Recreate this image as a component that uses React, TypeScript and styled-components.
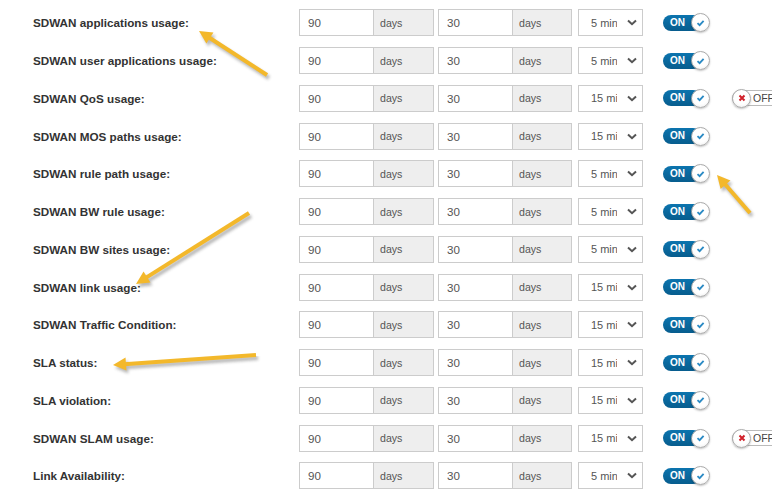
import React from "react";
import styled, { createGlobalStyle } from "styled-components";

const GlobalStyle = createGlobalStyle`
  html, body {
    margin: 0;
    padding: 0;
    background: #fff;
    font-family: "Liberation Sans", Arial, sans-serif;
  }
`;

const Page = styled.div`
  position: relative;
  width: 772px;
  height: 493px;
  overflow: hidden;
  padding-top: 4px;
  box-sizing: border-box;
`;

const Row = styled.div`
  display: flex;
  align-items: center;
  height: 37.75px;
  padding-left: 33px;
`;

const Label = styled.div`
  width: 266px;
  flex: none;
  font-size: 11.7px;
  font-weight: bold;
  color: #333;
`;

const InputGroup = styled.div<{ $gap: number }>`
  display: flex;
  height: 27px;
  flex: none;
  margin-right: ${(p) => p.$gap}px;
`;

const Field = styled.div`
  width: 74px;
  box-sizing: border-box;
  border: 1px solid #ccc;
  border-right: none;
  display: flex;
  align-items: center;
  padding-left: 8px;
  font-size: 11.6px;
  color: #555;
`;

const Addon = styled.div<{ $w: number }>`
  width: ${(p) => p.$w}px;
  box-sizing: border-box;
  border: 1px solid #ccc;
  background: #eee;
  display: flex;
  align-items: center;
  padding-left: 6px;
  font-size: 10.6px;
  color: #555;
`;

const Select = styled.div`
  width: 65px;
  height: 27px;
  box-sizing: border-box;
  border: 1px solid #ccc;
  display: flex;
  align-items: center;
  padding-left: 12px;
  margin-right: 20px;
  flex: none;
`;

const SelectText = styled.span`
  width: 26px;
  flex: none;
  overflow: hidden;
  white-space: nowrap;
  font-size: 11px;
  color: #555;
`;

const Chevron = styled.svg`
  margin-left: 10px;
  flex: none;
`;

const Switch = styled.div`
  position: relative;
  width: 47px;
  height: 19px;
  flex: none;
  display: flex;
  align-items: center;
`;

const Track = styled.div`
  width: 38px;
  height: 16px;
  border-radius: 8px;
  background: linear-gradient(#0c74ae, #075d8e);
  color: #fff;
  font-size: 10px;
  font-weight: bold;
  display: flex;
  align-items: center;
  padding-left: 7px;
  box-sizing: border-box;
  line-height: 1;
`;

const Knob = styled.div<{ $left: boolean }>`
  position: absolute;
  top: 0;
  ${(p) => (p.$left ? "left: 0;" : "right: 0;")}
  width: 19px;
  height: 19px;
  box-sizing: border-box;
  border-radius: 50%;
  border: 1px solid #aaa;
  background: radial-gradient(circle at 50% 40%, #fff 55%, #e8e8e8);
  box-shadow: 0 1px 2px rgba(0, 0, 0, 0.25);
  display: flex;
  align-items: center;
  justify-content: center;
`;

const OffSwitch = styled.div`
  position: relative;
  margin-left: 22px;
  width: 60px;
  height: 19px;
  flex: none;
  display: flex;
  align-items: center;
`;

const OffTrack = styled.div`
  width: 60px;
  height: 16px;
  border-radius: 8px;
  border: 1px solid #bbb;
  box-sizing: border-box;
  background: #fff;
  color: #444;
  font-size: 10.5px;
  display: flex;
  align-items: center;
  padding-left: 20px;
  line-height: 1;
`;

const Arrows = styled.svg`
  position: absolute;
  left: 0;
  top: 0;
  pointer-events: none;
`;

type Item = { label: string; every: string; off?: boolean };

const items: Item[] = [
  { label: "SDWAN applications usage:", every: "5 min" },
  { label: "SDWAN user applications usage:", every: "5 min" },
  { label: "SDWAN QoS usage:", every: "15 min", off: true },
  { label: "SDWAN MOS paths usage:", every: "15 min" },
  { label: "SDWAN rule path usage:", every: "5 min" },
  { label: "SDWAN BW rule usage:", every: "5 min" },
  { label: "SDWAN BW sites usage:", every: "5 min" },
  { label: "SDWAN link usage:", every: "15 min" },
  { label: "SDWAN Traffic Condition:", every: "15 min" },
  { label: "SLA status:", every: "15 min" },
  { label: "SLA violation:", every: "15 min" },
  { label: "SDWAN SLAM usage:", every: "15 min", off: true },
  { label: "Link Availability:", every: "5 min" },
];

function Check() {
  return (
    <svg width="9" height="8" viewBox="0 0 9 8">
      <path d="M1.5 4.2 L3.6 6.2 L7.6 1.8" fill="none" stroke="#2a8ac4" strokeWidth="1.8" />
    </svg>
  );
}

function Cross() {
  return (
    <svg width="8" height="8" viewBox="0 0 8 8">
      <path d="M1.5 1.5 L6.5 6.5 M6.5 1.5 L1.5 6.5" stroke="#d0202a" strokeWidth="2" />
    </svg>
  );
}

function Arrow({ x1, y1, x2, y2 }: { x1: number; y1: number; x2: number; y2: number }) {
  const ang = Math.atan2(y2 - y1, x2 - x1);
  const len = 13;
  const half = 6.5;
  const bx = x2 - Math.cos(ang) * len;
  const by = y2 - Math.sin(ang) * len;
  const px = -Math.sin(ang) * half;
  const py = Math.cos(ang) * half;
  const head = `${x2},${y2} ${bx + px},${by + py} ${bx - px},${by - py}`;
  return (
    <g>
      <g transform="translate(2,3)" opacity="0.35" filter="url(#blur)">
        <line x1={x1} y1={y1} x2={bx} y2={by} stroke="#333" strokeWidth="4" />
        <polygon points={head} fill="#333" />
      </g>
      <line x1={x1} y1={y1} x2={bx + Math.cos(ang) * 2} y2={by + Math.sin(ang) * 2} stroke="#f3b82b" strokeWidth="4" />
      <polygon points={head} fill="#f3b82b" />
    </g>
  );
}

export default function App() {
  return (
    <Page>
      <GlobalStyle />
      {items.map((it) => (
        <Row key={it.label}>
          <Label>{it.label}</Label>
          <InputGroup $gap={4}>
            <Field>90</Field>
            <Addon $w={61}>days</Addon>
          </InputGroup>
          <InputGroup $gap={6}>
            <Field>30</Field>
            <Addon $w={60}>days</Addon>
          </InputGroup>
          <Select>
            <SelectText>{it.every}</SelectText>
            <Chevron width="10" height="7" viewBox="0 0 10 7">
              <path d="M1 1.5 L5 5.2 L9 1.5" fill="none" stroke="#555" strokeWidth="2" />
            </Chevron>
          </Select>
          <Switch>
            <Track>ON</Track>
            <Knob $left={false}>
              <Check />
            </Knob>
          </Switch>
          {it.off && (
            <OffSwitch>
              <OffTrack>OFF</OffTrack>
              <Knob $left>
                <Cross />
              </Knob>
            </OffSwitch>
          )}
        </Row>
      ))}
      <Arrows width="772" height="493">
        <defs>
          <filter id="blur">
            <feGaussianBlur stdDeviation="1.5" />
          </filter>
        </defs>
        <Arrow x1={267} y1={75} x2={199} y2={31} />
        <Arrow x1={249} y1={213} x2={136} y2={284} />
        <Arrow x1={256} y1={355} x2={113} y2={365} />
        <Arrow x1={750} y1={213} x2={717} y2={175} />
      </Arrows>
    </Page>
  );
}
